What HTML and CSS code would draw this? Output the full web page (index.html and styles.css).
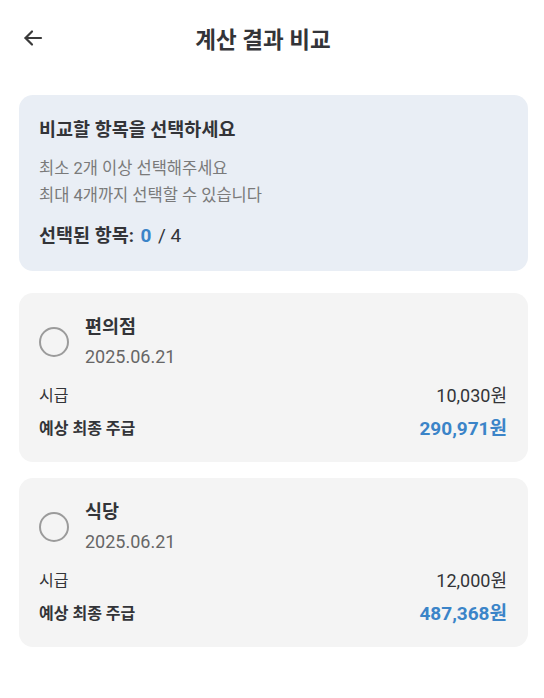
FILE: index.html
```html
<!DOCTYPE html>
<html lang="ko">
<head>
  <meta charset="UTF-8" />
  <meta name="viewport" content="width=device-width, initial-scale=1.0" />
  <title>계산 결과 비교</title>
  <link rel="stylesheet" href="styles.css">
</head>
<body>
  <header class="topbar">
    <button class="back" aria-label="뒤로">
      <svg width="24" height="24" viewBox="0 0 24 24" fill="none" stroke="#3a3a3a" stroke-width="2.2" stroke-linecap="round" stroke-linejoin="round">
        <path d="M20 12H4.5" />
        <path d="M11 5.5L4.5 12l6.5 6.5" />
      </svg>
    </button>
    <h1>계산 결과 비교</h1>
  </header>

  <main class="content">
    <section class="notice">
      <h2>비교할 항목을 선택하세요</h2>
      <p class="hint">최소 2개 이상 선택해주세요<br>최대 4개까지 선택할 수 있습니다</p>
      <p class="count">선택된 항목: <span class="num">0</span> <span class="total">/ 4</span></p>
    </section>

    <div class="result-card">
      <div class="card-head">
        <span class="check"></span>
        <div>
          <div class="name">편의점</div>
          <div class="date">2025.06.21</div>
        </div>
      </div>
      <div class="row">
        <span>시급</span>
        <span class="val">10,030원</span>
      </div>
      <div class="row strong">
        <span>예상 최종 주급</span>
        <span class="val">290,971원</span>
      </div>
    </div>

    <div class="result-card">
      <div class="card-head">
        <span class="check"></span>
        <div>
          <div class="name">식당</div>
          <div class="date">2025.06.21</div>
        </div>
      </div>
      <div class="row">
        <span>시급</span>
        <span class="val">12,000원</span>
      </div>
      <div class="row strong">
        <span>예상 최종 주급</span>
        <span class="val">487,368원</span>
      </div>
    </div>
  </main>
</body>
</html>
```

FILE: styles.css
```css
:root {
  --text: #333438;
  --muted: #7a7a7a;
  --blue: #3b84c8;
  --notice-bg: #e9eef5;
  --card-bg: #f4f4f4;
}

body {
  margin: 0;
  background: #ffffff;
  color: var(--text);
  font-family: "Roboto", "Noto Sans CJK KR", "Noto Sans", sans-serif;
}

.topbar {
  position: relative;
  height: 76px;
  display: flex;
  align-items: center;
  justify-content: center;
  padding-right: 18px;
}

.topbar h1 {
  margin: 0;
  font-size: 22.5px;
  font-weight: 700;
  color: var(--text);
}

.back {
  position: absolute;
  left: 21px;
  top: 26px;
  padding: 0;
  border: none;
  background: none;
  width: 24px;
  height: 24px;
}

.content {
  padding: 19px 16px 40px 19px;
}

.notice {
  background: var(--notice-bg);
  border-radius: 14px;
  padding: 22px 20px;
}

.notice h2 {
  margin: 0;
  font-size: 18.5px;
  font-weight: 700;
  line-height: 26px;
}

.hint {
  margin: 12px 0 0;
  font-size: 16.5px;
  line-height: 27px;
  color: var(--muted);
}

.count {
  margin: 14px 0 0;
  font-size: 18.5px;
  line-height: 26px;
  font-weight: 700;
}

.count .num {
  margin: 0 2px;
  font-size: 19px;
  color: var(--blue);
}

.count .total {
  font-size: 19px;
  font-weight: 400;
}

.result-card {
  background: var(--card-bg);
  border-radius: 14px;
  padding: 21px 21px 20px 20px;
  margin-top: 22px;
}

.result-card + .result-card {
  margin-top: 16px;
}

.card-head {
  display: flex;
  align-items: center;
  gap: 16px;
  margin-bottom: 13px;
}

.check {
  width: 26px;
  height: 26px;
  border: 2px solid #9b9b9b;
  border-radius: 50%;
}

.name {
  font-size: 18.5px;
  font-weight: 700;
  line-height: 26px;
}

.date {
  margin-top: 4px;
  font-size: 18px;
  line-height: 26px;
  color: #666666;
}

.row {
  display: flex;
  justify-content: space-between;
  align-items: center;
  font-size: 16px;
  line-height: 26px;
}

.row .val {
  font-size: 18px;
}

.row.strong {
  margin-top: 7px;
  font-weight: 700;
}

.row.strong .val {
  font-size: 19px;
  color: var(--blue);
}
```
